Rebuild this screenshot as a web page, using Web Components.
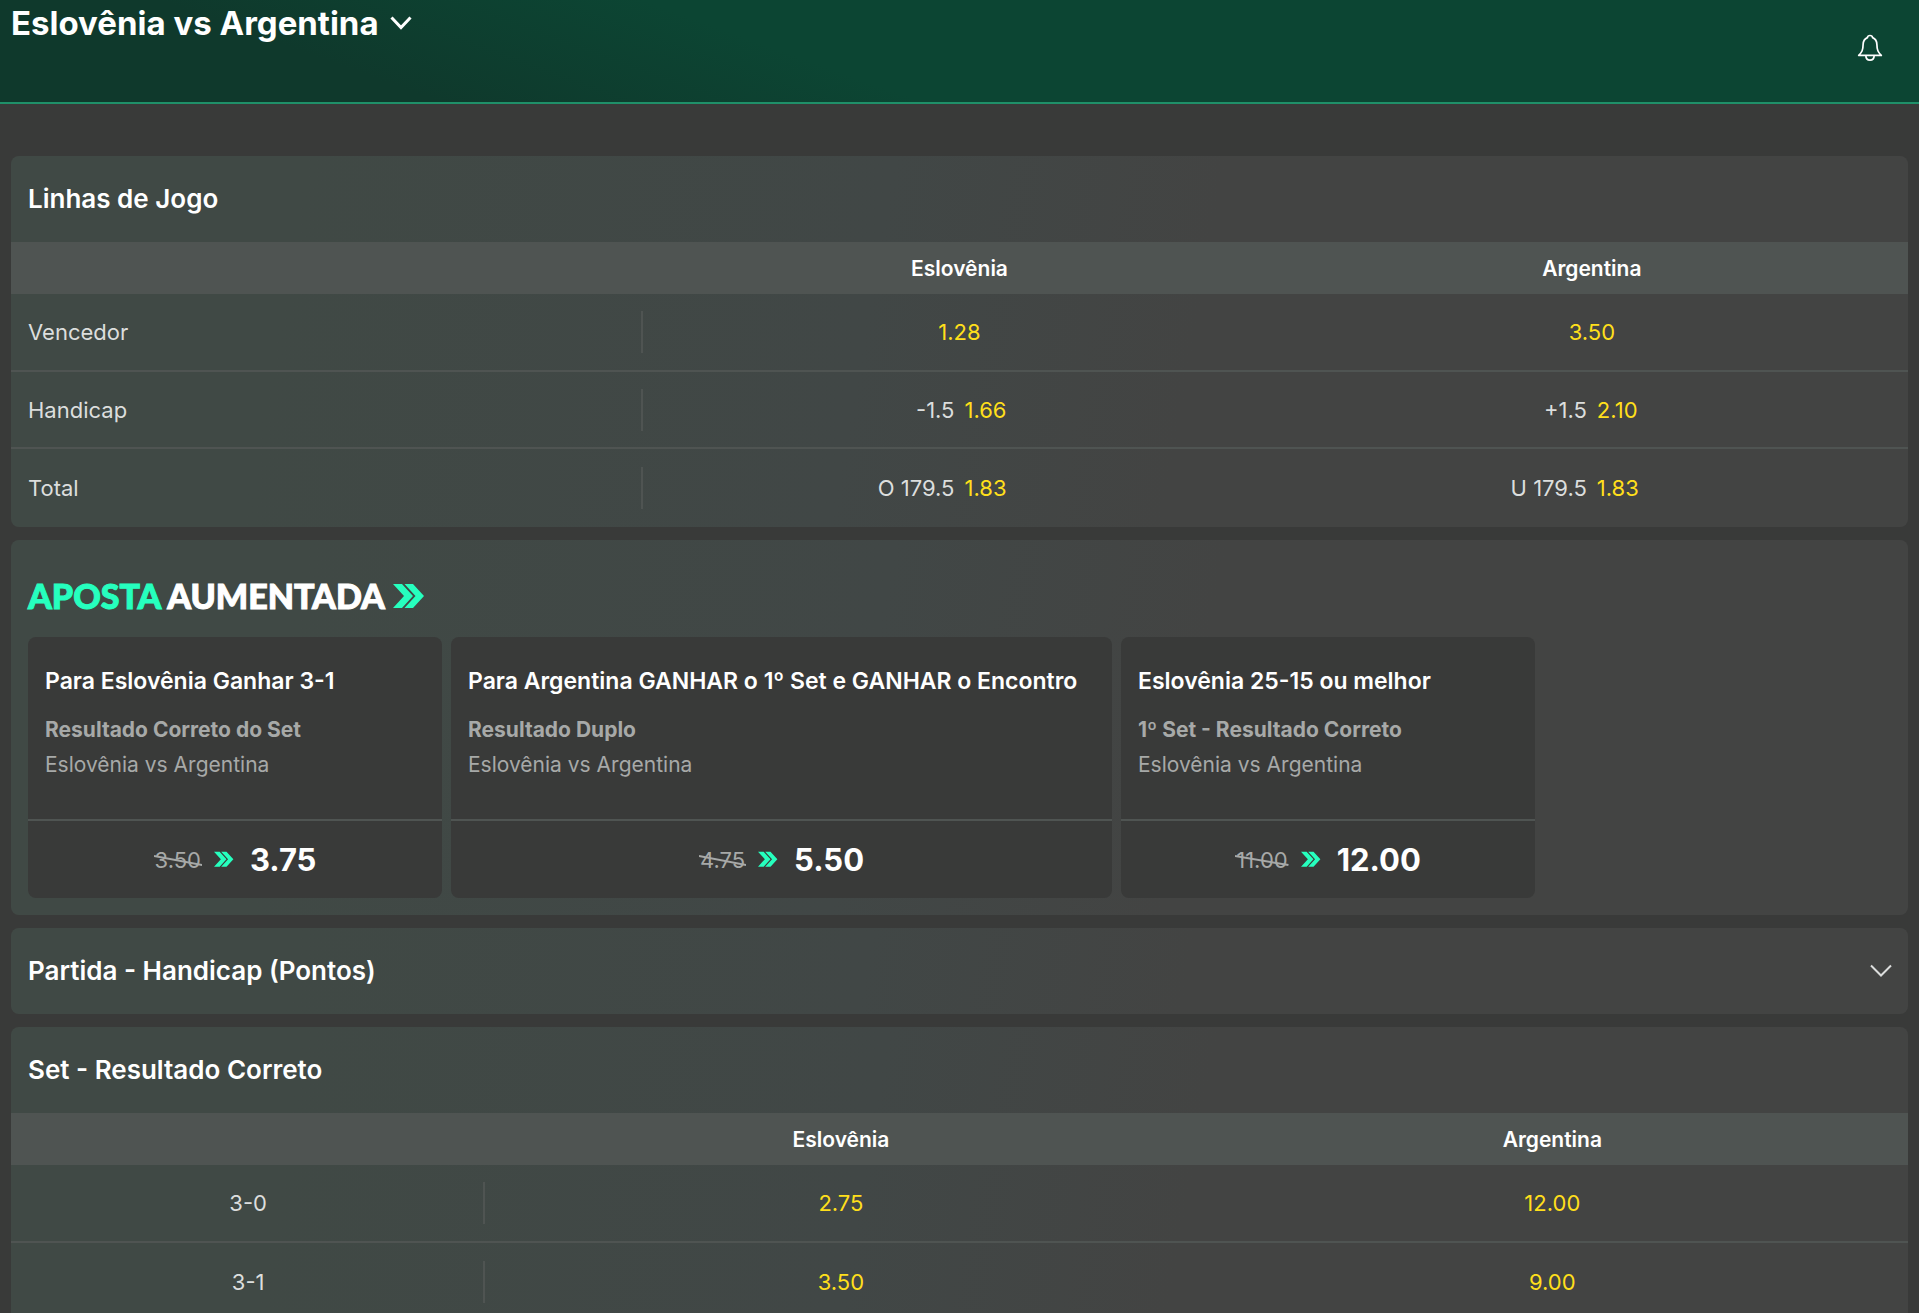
<!DOCTYPE html>
<html lang="pt">
<head>
<meta charset="utf-8">
<meta name="viewport" content="width=device-width, initial-scale=1">
<title>Eslovênia vs Argentina</title>
<style>
    :root {
        --main-font: Inter, "Liberation Sans", sans-serif;
        --page: #393a39;
        --panel: linear-gradient(100deg, #404945 15%, #414746 45%, #434443 62%);
        --line: #4f5452;
        --text: #dcdedd;
        --muted: #a7a9a8;
        --odds: #ffdf1b;
        --boost: #26ffbe;
    }

    body {
        margin: 0;
        height: 100vh;
        overflow: hidden;
        background: var(--page);
        color: var(--text);
        font-family: var(--main-font);
    }

    main {
        display: flex;
        flex-direction: column;
        gap: 13px;
        padding: 52px 11px;
    }
</style>
</head>
<body>
<match-header>Eslovênia vs Argentina</match-header>
<main>
    <market-group heading="Linhas de Jogo">
        <odds-table id="lines" layout="thirds"></odds-table>
    </market-group>
    <boost-panel>
        <boost-card pick="Para Eslovênia Ganhar 3-1" market="Resultado Correto do Set" was="3.50" now="3.75">Eslovênia vs Argentina</boost-card>
        <boost-card pick="Para Argentina GANHAR o 1º Set e GANHAR o Encontro" market="Resultado Duplo" was="4.75" now="5.50">Eslovênia vs Argentina</boost-card>
        <boost-card pick="Eslovênia 25-15 ou melhor" market="1º Set - Resultado Correto" was="11.00" now="12.00">Eslovênia vs Argentina</boost-card>
    </boost-panel>
    <market-group heading="Partida - Handicap (Pontos)" collapsed></market-group>
    <market-group heading="Set - Resultado Correto">
        <odds-table id="sets" layout="quarter"></odds-table>
    </market-group>
</main>

<script>
const teams = ['Eslovênia', 'Argentina'];

// Each cell is [odds] or [line, odds]
const markets = {
    lines: [
        ['Vencedor', ['1.28'], ['3.50']],
        ['Handicap', ['-1.5', '1.66'], ['+1.5', '2.10']],
        ['Total', ['O 179.5', '1.83'], ['U 179.5', '1.83']]
    ],
    sets: [
        ['3-0', ['2.75'], ['12.00']],
        ['3-1', ['3.50'], ['9.00']]
    ]
};

class MatchHeader extends HTMLElement {
    constructor() {
        super();
        this.attachShadow({ mode: "open" });
    }

    connectedCallback() {
        this.shadowRoot.innerHTML = `
            <style>
            :host {
                display: block;
                background: linear-gradient(20deg, #0f392c 20%, #0c4533 42%);
                border-bottom: 2px solid #1f9069;
            }

            header {
                display: flex;
                justify-content: space-between;
                height: 102px;
                padding: 0 35px 0 11px;
                color: white;
            }

            h1 {
                margin: 0;
                font-size: 33px;
                font-weight: 700;
                line-height: 46px;
            }

            button {
                all: unset;
                cursor: pointer;
            }

            .match {
                display: flex;
                align-items: center;
                gap: 10px;
            }

            .alerts {
                display: flex;
                align-items: center;
                padding-bottom: 6px;
            }

            svg {
                display: block;
                fill: none;
                stroke: currentColor;
            }
            </style>
            <header>
                <h1><button class="match"><slot></slot>
                    <svg width="24" height="16" viewBox="0 0 24 16" stroke-width="3"><path d="M2.5 2.5L12 12.5L21.5 2.5"/></svg>
                </button></h1>
                <button class="alerts" aria-label="Alertas">
                    <svg width="28" height="30" viewBox="0 0 28 30" stroke-width="1.7" stroke-linejoin="round"><path d="M14 2.5C12.5 2.5 11.6 3.3 11.4 4.6C8.3 5.8 7.2 8.3 7.1 11.5C7 17 6.1 19.1 2.7 22.4H25.3C21.9 19.1 21 17 20.9 11.5C20.8 8.3 19.7 5.8 16.6 4.6C16.4 3.3 15.5 2.5 14 2.5Z M9.8 22.4C9.9 25.3 11.5 27.2 14 27.2S18.1 25.3 18.2 22.4"/></svg>
                </button>
            </header>
        `;
    }
}

class MarketGroup extends HTMLElement {
    constructor() {
        super();
        this.attachShadow({ mode: "open" });
    }

    connectedCallback() {
        const collapsed = this.hasAttribute('collapsed');
        this.shadowRoot.innerHTML = `
            <style>
            :host {
                display: block;
                border-radius: 8px;
                overflow: hidden;
                background: var(--panel);
            }

            h2 {
                margin: 0;
                font-size: 26px;
                font-weight: 600;
                line-height: 86px;
                color: white;
            }

            button {
                all: unset;
                box-sizing: border-box;
                display: flex;
                align-items: center;
                justify-content: space-between;
                width: 100%;
                padding: 0 16px 0 17px;
                cursor: pointer;
            }

            svg {
                fill: none;
                stroke: var(--text);
                stroke-width: 2;
            }
            </style>
            <h2><button aria-expanded="${!collapsed}">${this.getAttribute('heading')}
                ${collapsed ? '<svg width="22" height="14" viewBox="0 0 22 14"><path d="M1 1.5L11 11.5L21 1.5"/></svg>' : ''}
            </button></h2>
            <slot></slot>
        `;
    }
}

class OddsTable extends HTMLElement {
    constructor() {
        super();
        this.attachShadow({ mode: "open" });
    }

    connectedCallback() {
        const rows = markets[this.id];
        this.shadowRoot.innerHTML = `
            <style>
            :host {
                display: block;
                --first: calc(100% / 3);
            }

            :host([layout="quarter"]) {
                --first: 25%;
            }

            table {
                width: 100%;
                table-layout: fixed;
                border-collapse: separate;
                border-spacing: 0;
                font-size: 22px;
            }

            th, td {
                box-sizing: border-box;
                padding: 0;
                font-weight: 400;
                text-align: center;
            }

            .name {
                width: var(--first);
            }

            thead tr > * {
                height: 52px;
                background: var(--line);
                color: white;
                font-size: 21px;
                font-weight: 600;
            }

            tbody tr > * {
                height: 78px;
                border-bottom: 2px solid var(--line);
            }

            tbody tr:nth-child(even) > * {
                height: 77px;
            }

            tbody tr:last-child > * {
                border-bottom: 0;
            }

            tbody th {
                background: linear-gradient(var(--line), var(--line)) right center / 2px 42px no-repeat;
            }

            :host([layout="thirds"]) tbody th {
                padding-left: 17px;
                text-align: left;
            }

            button {
                all: unset;
                box-sizing: border-box;
                width: 100%;
                color: var(--odds);
                cursor: pointer;
            }

            .pair {
                display: grid;
                grid-template-columns: 1fr 1fr;
                gap: 10px;
                text-align: left;
            }

            .line {
                color: var(--text);
                text-align: right;
            }
            </style>
            <table>
                <thead>
                    <tr><td class="name"></td>${teams.map(t => `<th scope="col">${t}</th>`).join('')}</tr>
                </thead>
                <tbody>
                    ${rows.map(([name, ...cells]) => `
                        <tr><th scope="row">${name}</th>${cells.map(c => `<td>${this.cell(c)}</td>`).join('')}</tr>
                    `).join('')}
                </tbody>
            </table>
        `;
    }

    cell(parts) {
        if (parts.length === 1) {
            return `<button>${parts[0]}</button>`;
        }
        return `<button class="pair"><span class="line">${parts[0]}</span><span>${parts[1]}</span></button>`;
    }
}

class BoostPanel extends HTMLElement {
    constructor() {
        super();
        this.attachShadow({ mode: "open" });
    }

    connectedCallback() {
        this.shadowRoot.innerHTML = `
            <style>
            :host {
                display: block;
                padding: 33px 17px 17px;
                border-radius: 8px;
                background: var(--panel);
            }

            h2 {
                display: flex;
                align-items: center;
                gap: 8px;
                margin: 0 0 18px;
                font-family: Lato, sans-serif;
                font-size: 34px;
                font-weight: 900;
                line-height: 46px;
                color: white;
                -webkit-text-stroke: 1px currentColor;
            }

            em {
                font-style: normal;
                color: var(--boost);
            }

            .cards {
                display: grid;
                grid-template-columns: 414px 661px 414px;
                gap: 9px;
            }
            </style>
            <h2><span><em>APOSTA</em> AUMENTADA</span><boost-arrows size="32"></boost-arrows></h2>
            <div class="cards"><slot></slot></div>
        `;
    }
}

class BoostCard extends HTMLElement {
    constructor() {
        super();
        this.attachShadow({ mode: "open" });
    }

    connectedCallback() {
        this.shadowRoot.innerHTML = `
            <style>
            :host {
                display: block;
                border-radius: 8px;
                background: var(--page);
                white-space: nowrap;
            }

            .info {
                height: 182px;
                box-sizing: border-box;
                padding: 29px 17px 0;
                color: var(--muted);
                font-size: 21px;
                line-height: 35px;
            }

            h3 {
                margin: 0 0 16px;
                color: white;
                font-size: 23px;
                font-weight: 600;
                line-height: 30px;
            }

            p {
                margin: 0;
            }

            .market {
                font-weight: 700;
            }

            button {
                all: unset;
                box-sizing: border-box;
                display: flex;
                align-items: center;
                justify-content: center;
                width: 100%;
                height: 79px;
                border-top: 2px solid var(--line);
                color: white;
                cursor: pointer;
            }

            s {
                position: relative;
                margin-right: 12px;
                padding: 0 1px;
                color: var(--muted);
                font-size: 22px;
                text-decoration: none;
            }

            /* Slanted strike over the old price */
            s svg {
                position: absolute;
                inset: 0;
                width: 100%;
                height: 100%;
                fill: none;
                stroke: var(--muted);
                stroke-width: 2;
            }

            strong {
                margin-left: 16px;
                font-size: 31px;
                font-weight: 700;
            }
            </style>
            <div class="info">
                <h3>${this.getAttribute('pick')}</h3>
                <p class="market">${this.getAttribute('market')}</p>
                <p><slot></slot></p>
            </div>
            <button>
                <s>${this.getAttribute('was')}<svg viewBox="0 0 50 26" preserveAspectRatio="none"><path d="M0 9L50 18"/></svg></s>
                <boost-arrows size="20"></boost-arrows>
                <strong>${this.getAttribute('now')}</strong>
            </button>
        `;
    }
}

class BoostArrows extends HTMLElement {
    constructor() {
        super();
        this.attachShadow({ mode: "open" });
    }

    connectedCallback() {
        this.shadowRoot.innerHTML = `
            <style>
            :host {
                display: block;
            }

            svg {
                display: block;
                fill: var(--boost);
            }
            </style>
            <svg width="${this.getAttribute('size')}" viewBox="0 0 32 26"><path d="M0 1H9L20 13L9 25H0L11 13ZM11.5 1H20L31 13L20 25H11.5L22.5 13Z"/></svg>
        `;
    }
}

customElements.define("boost-arrows", BoostArrows);
customElements.define("match-header", MatchHeader);
customElements.define("market-group", MarketGroup);
customElements.define("odds-table", OddsTable);
customElements.define("boost-panel", BoostPanel);
customElements.define("boost-card", BoostCard);
</script>
</body>
</html>
